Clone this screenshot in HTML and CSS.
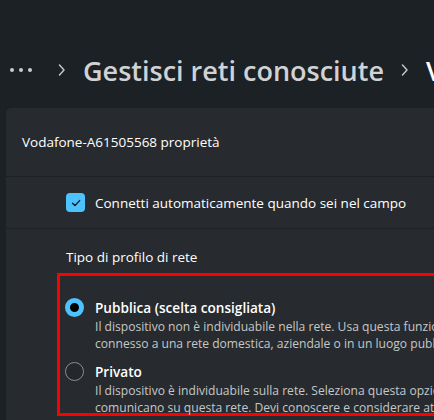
FILE: index.html
```html
<!DOCTYPE html>
<html lang="it">
<head>
<meta charset="utf-8">
<link rel="stylesheet" href="styles.css">
</head>
<body>
<div class="page">
  <nav class="breadcrumb">
    <span class="dots"><i></i><i></i><i></i></span>
    <svg class="chev" width="8" height="14" viewBox="0 0 8 14"><path d="M1.5 2 L6 7 L1.5 12" fill="none" stroke="#c3c6c8" stroke-width="1.5" stroke-linecap="round" stroke-linejoin="round"/></svg>
    <span class="crumb">Gestisci reti conosciute</span>
    <svg class="chev" width="8" height="14" viewBox="0 0 8 14"><path d="M1.5 2 L6 7 L1.5 12" fill="none" stroke="#c3c6c8" stroke-width="1.5" stroke-linecap="round" stroke-linejoin="round"/></svg>
    <span class="crumb current">Vodafone-A61505568</span>
  </nav>
  <section class="card">
    <div class="card-header">Vodafone-A61505568 proprietà</div>
    <div class="row check-row">
      <span class="checkbox">
        <svg width="12" height="12" viewBox="0 0 12 12"><path d="M2.5 6.3 L5 8.6 L9.6 3.6" fill="none" stroke="#0b1a22" stroke-width="1.4" stroke-linecap="round" stroke-linejoin="round"/></svg>
      </span>
      <span class="label">Connetti automaticamente quando sei nel campo</span>
    </div>
    <div class="row profile">
      <div class="profile-title">Tipo di profilo di rete</div>
      <div class="highlight">
        <div class="option">
          <span class="radio checked"></span>
          <div class="option-text">
            <div class="option-name">Pubblica (scelta consigliata)</div>
            <div class="option-desc">Il dispositivo non è individuabile nella rete. Usa questa funzione nella maggior parte dei casi, quando sei</div>
            <div class="option-desc">connesso a una rete domestica, aziendale o in un luogo pubblico.</div>
          </div>
        </div>
        <div class="option">
          <span class="radio"></span>
          <div class="option-text">
            <div class="option-name">Privato</div>
            <div class="option-desc">Il dispositivo è individuabile sulla rete. Seleziona questa opzione se hai bisogno di condividere file o usare app che</div>
            <div class="option-desc">comunicano su questa rete. Devi conoscere e considerare attendibili le persone e i dispositivi in rete.</div>
          </div>
        </div>
      </div>
    </div>
  </section>
</div>
</body>
</html>
```
FILE: styles.css
```css
html, body {
  margin: 0;
  padding: 0;
  background: #1c2125;
  overflow: hidden;
}
.page {
  width: 434px;
  height: 420px;
  overflow: hidden;
  font-family: "Open Sans", "Noto Sans", sans-serif;
  color: #ffffff;
}
.breadcrumb {
  display: flex;
  align-items: center;
  height: 36px;
  margin-top: 52px;
  padding-left: 10px;
  white-space: nowrap;
}
.dots {
  flex: none;
  display: flex;
  gap: 5px;
  width: 23px;
  margin-right: 25px;
}
.dots i {
  width: 4px;
  height: 4px;
  border-radius: 50%;
  background: #c9cbcc;
}
.chev {
  flex: none;
  margin-right: 17px;
}
.crumb {
  flex: none;
  font-size: 27px;
  font-weight: 600;
  color: #d0d2d3;
  margin-right: 17px;
}
.current {
  color: #ffffff;
}
.card {
  margin-top: 20px;
  margin-left: 6px;
  width: 600px;
  background: #272b2f;
  border-top-left-radius: 5px;
  height: 400px;
}
.card-header {
  height: 68px;
  display: flex;
  align-items: center;
  padding-left: 16px;
  font-size: 13.5px;
  box-sizing: border-box;
}
.row {
  border-top: 1px solid #1d2125;
}
.check-row {
  height: 52px;
  display: flex;
  align-items: center;
  padding-left: 60px;
  box-sizing: border-box;
}
.checkbox {
  width: 19px;
  height: 19px;
  border-radius: 4px;
  background: #4cc2ff;
  display: flex;
  align-items: center;
  justify-content: center;
  margin-right: 10px;
}
.label {
  font-size: 13.5px;
  white-space: nowrap;
}
.profile {
  padding-left: 51px;
  padding-top: 19px;
}
.profile-title {
  padding-left: 9px;
  font-size: 13.5px;
  height: 25px;
}
.highlight {
  border: 3px solid #ff0000;
  width: 560px;
  height: 143px;
  box-sizing: border-box;
  padding: 21px 0 0 5px;
  display: flex;
  flex-direction: column;
  gap: 9px;
}
.option {
  display: flex;
  align-items: flex-start;
}
.radio {
  width: 19px;
  height: 19px;
  border-radius: 50%;
  box-sizing: border-box;
  border: 1px solid #8b8e90;
  background: #24282b;
  flex: none;
  margin-right: 11px;
  margin-top: 1px;
}
.radio.checked {
  border: 5px solid #4cc2ff;
  background: #000000;
}
.option-text {
  width: 600px;
}
.option-name {
  font-size: 13.6px;
  font-weight: 600;
  line-height: 21px;
}
.option-desc {
  font-size: 12.1px;
  line-height: 17px;
  color: #c5c7c8;
  white-space: nowrap;
}
```
